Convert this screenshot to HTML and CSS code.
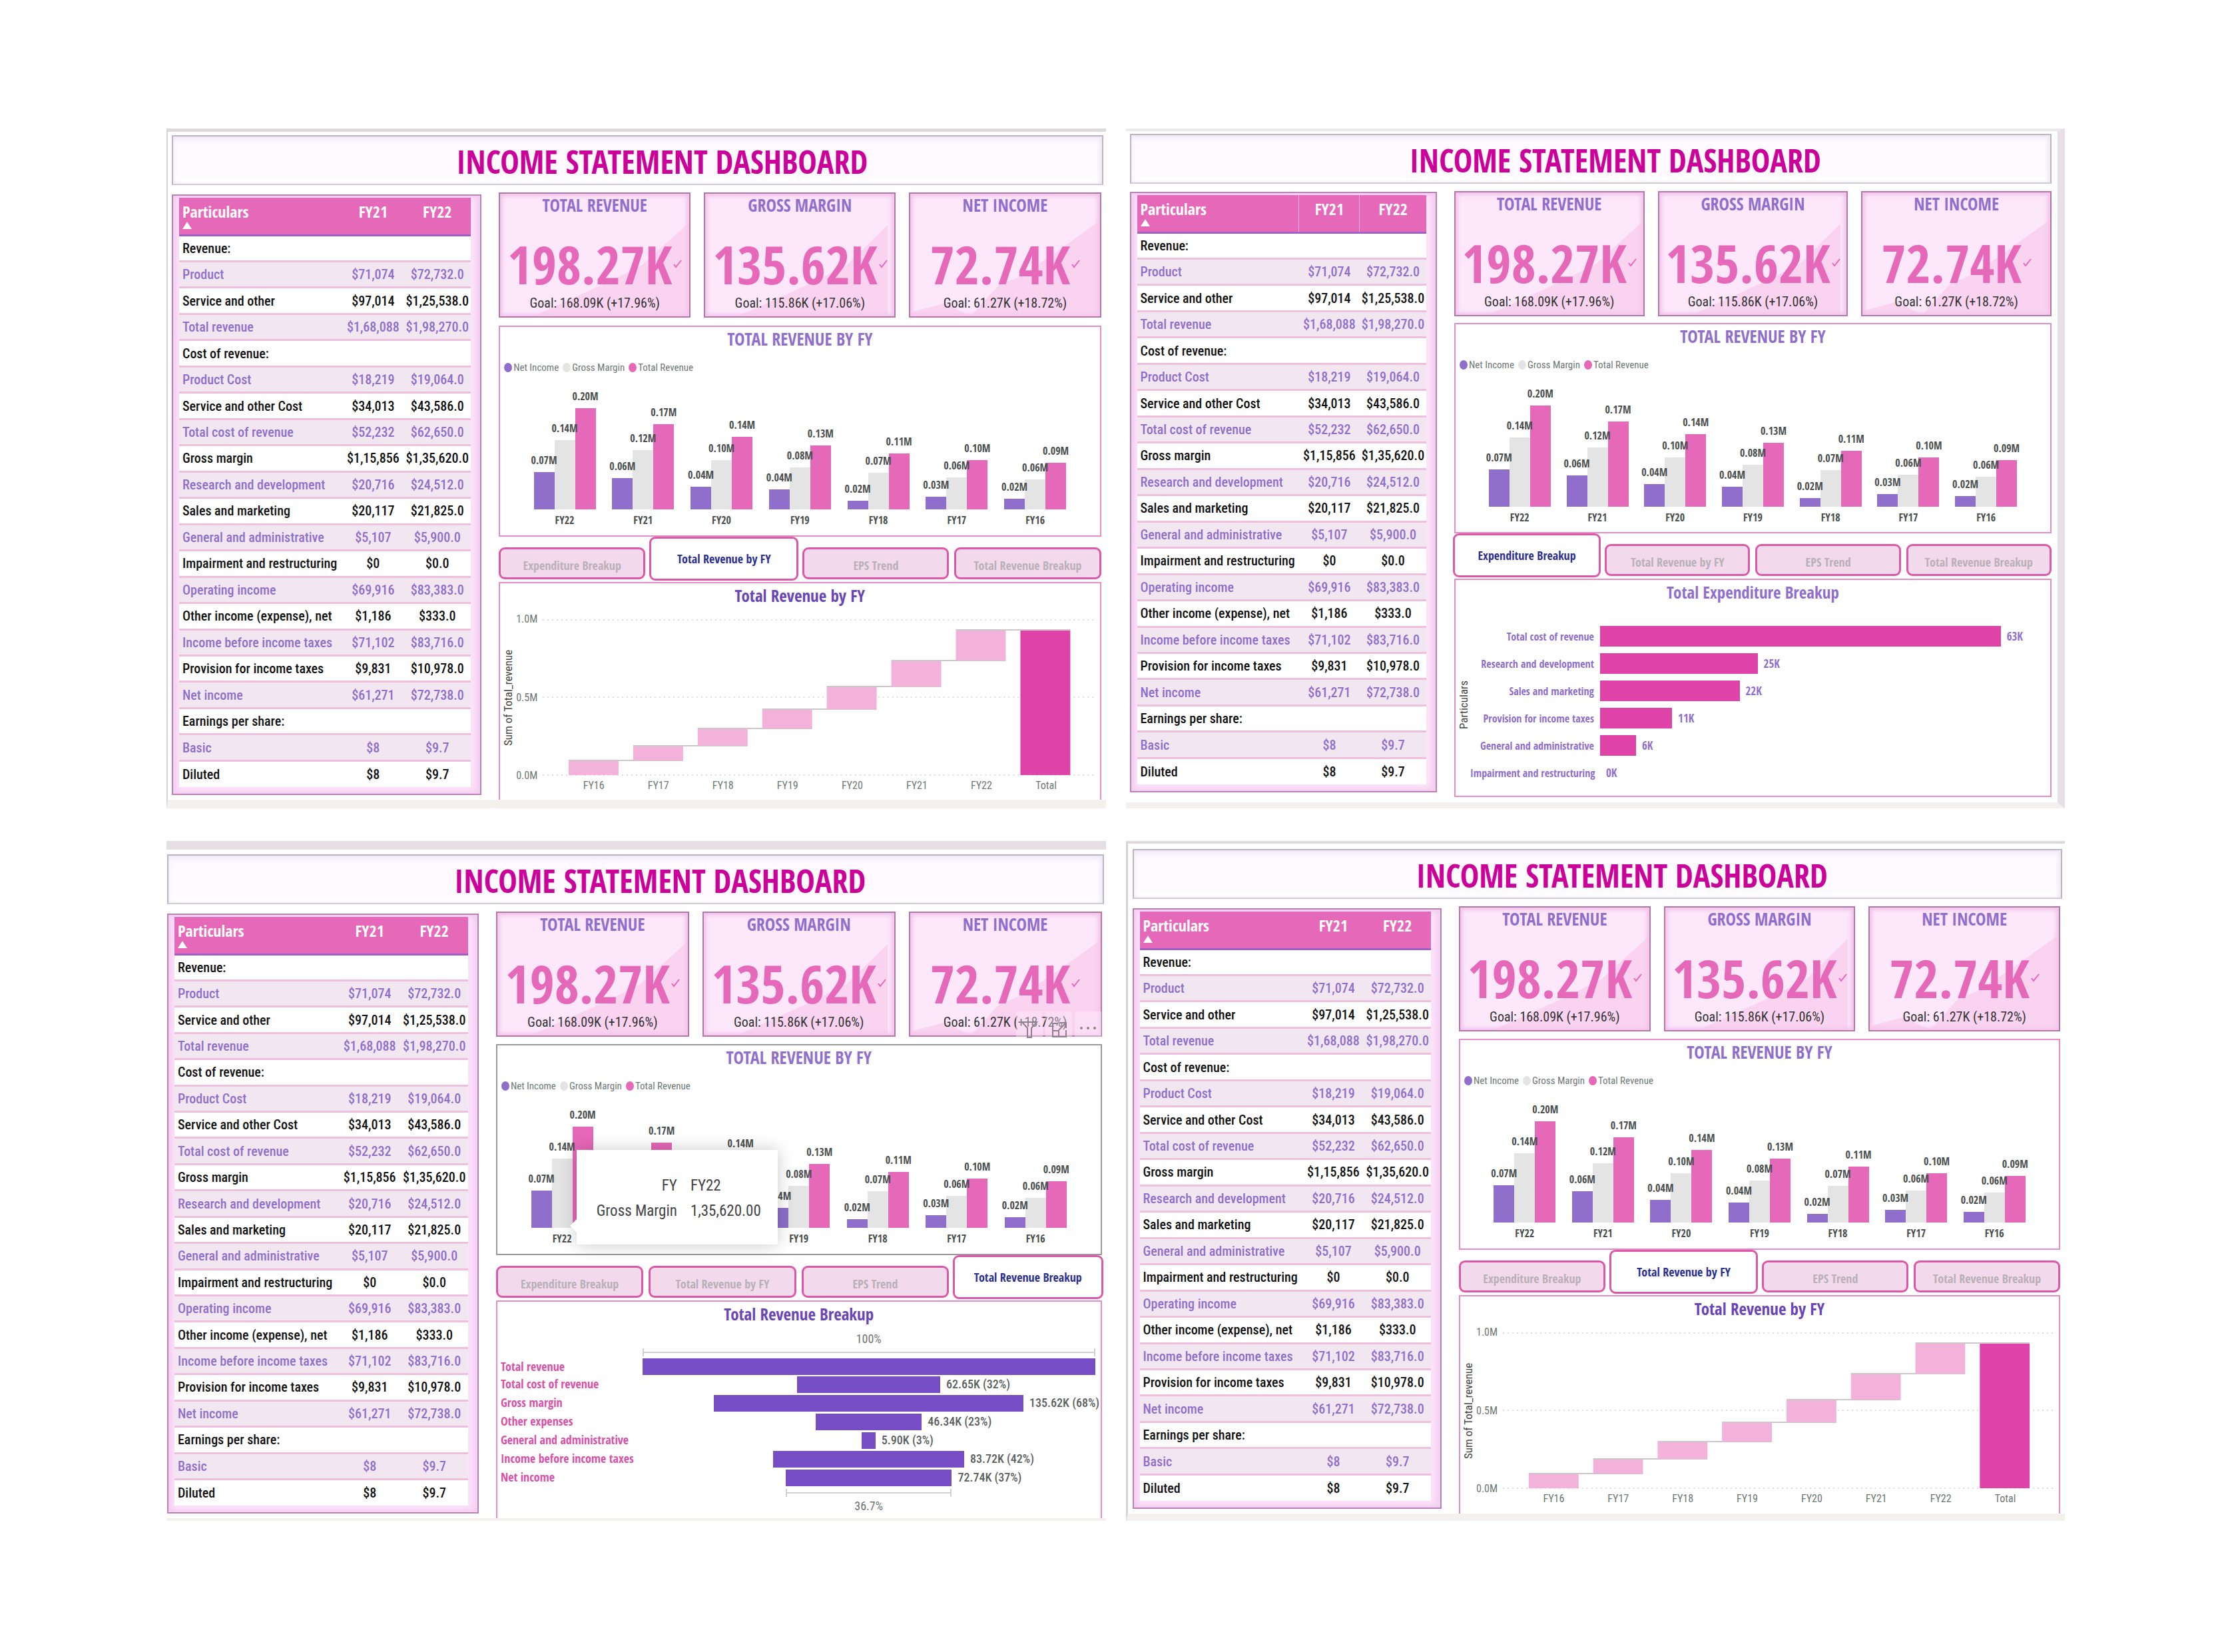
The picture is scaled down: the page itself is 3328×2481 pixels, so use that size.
FILE: index.html
```html
<!DOCTYPE html>
<html lang="en">
<head>
<meta charset="utf-8">
<meta name="viewport" content="width=device-width, initial-scale=1">
<title>Income Statement Dashboard</title>
<link rel="stylesheet" href="styles.css">
</head>
<body>
<main class="board">
  <section class="panel panel-a" data-view="waterfall" data-tab="1"></section>
  <section class="panel panel-b" data-view="expenditure" data-tab="0"></section>
  <section class="panel panel-c" data-view="funnel" data-tab="3" data-hover="yes"></section>
  <section class="panel panel-d" data-view="waterfall" data-tab="1"></section>
</main>
<script src="app.js"></script>
</body>
</html>
```
FILE: styles.css
```css
:root {
  --display: "Open Sans Condensed", "Roboto Condensed", "Open Sans", sans-serif;
  --text: "Roboto Condensed", "Roboto", "Open Sans", sans-serif;
  --pink: #e668b8;
  --hot: #e043a7;
  --violet: #8f6fcb;
  --deep: #774dc5;
  --edge: #e88cc8;
}

* { box-sizing: border-box; }

body {
  margin: 0;
  background: #fff;
  font-family: var(--text);
  color: #222;
}

h1, h2, h3, p { margin: 0; }

.board {
  display: grid;
  grid-template-columns: 1fr 1fr;
  gap: 49px 30px;
  padding: 193px 227px 193px 250px;
}

/* One dashboard page */
.panel {
  --gap: 12px;
  display: flex;
  flex-direction: column;
  border-style: solid;
  border-color: #ddd8da #e8dfe6 #f3f0ee #d6d3d6;
  border-width: 5px 0 13px 2px;
  padding: 5px 4px 0 6px;
}
.panel-b { --gap: 10px; border-width: 4px 11px 9px 0; border-top-color: #ebe9ea; padding: 4px 9px 8px 6px; }
.panel-c { --gap: 11px; border-width: 13px 0 4px 0; border-top-color: #e6dee5; padding: 7px 3px 0 1px; }
.panel-d { --gap: 11px; border-width: 4px 0 11px 3px; padding: 8px 4px 0 7px; }

.banner {
  height: 75px;
  display: flex;
  align-items: center;
  justify-content: center;
  padding: 4px 0 0 74px;
  border: 2px solid #bdb5c6;
  border-bottom-color: #cfccd2;
  background: #fefaff;
  box-shadow: inset 0 4px 8px #efe8f6, inset -3px 0 6px #f0eaf6, inset 0 -8px 8px #fff;
}
.banner h1 {
  font: 700 48px/56px var(--display);
  color: #cb0299;
}

.content {
  flex: 1;
  display: grid;
  grid-template-columns: 465fr 904fr;
  gap: 26px;
  padding: 11px 3px 0 0;
}
.panel-b .content { padding-right: 0; }

/* Statement table */
.statement {
  margin: 3px 0 7px;
  padding: 3px 14px 10px 9px;
  border: 2px solid #b981b4;
  background: #fde3fb;
  box-shadow: inset -6px -4px 10px #f3cdf0, inset 5px 3px 7px #f3cdf0;
}
.panel-b .statement { margin-top: 1px; }
.statement table {
  width: 100%;
  height: 100%;
  border-collapse: collapse;
  table-layout: fixed;
  font-size: 20px;
  line-height: 24px;
  font-weight: 500;
}
.statement .name { width: 56%; }
.statement .fy21 { width: 21%; }
.statement th, .statement td { padding: 0; text-align: center; }
.statement th:first-child, .statement td:first-child { padding-left: 5px; text-align: left; white-space: nowrap; }
.statement thead th {
  height: 56px;
  padding-top: 6px;
  vertical-align: top;
  background: var(--pink);
  border-bottom: 3px solid #a35fc8;
  color: #fff;
  font: 700 24px/30px var(--display);
}
.panel-b thead th + th { border-left: 1px solid #f7b5de; }
.sort {
  display: block;
  width: 0;
  border: 7px solid transparent;
  border-top: 0;
  border-bottom: 11px solid #fff;
}
.statement tbody td { height: 39px; background: #fff; color: #111; border-bottom: 3px solid #efbfde; }
.statement tbody tr:nth-child(even) td { background: #f2e7f0; color: var(--violet); }
.statement tbody tr:last-child td { border-bottom: 0; }

/* Right column */
.visuals { display: flex; flex-direction: column; min-width: 0; }

.cards {
  display: grid;
  grid-template-columns: repeat(3, 1fr);
  gap: 20px;
  margin-bottom: var(--gap);
}
.card {
  position: relative;
  height: 188px;
  border: 2px solid #b377ac;
  background: #fde7fb;
  box-shadow: inset 0 3px 6px #f0c0e8, inset -4px 0 6px #f3c8ee, inset 3px -3px 6px #f3c8ee;
  text-align: center;
}
.card > * { position: relative; }
.card .area { position: absolute; inset: 0; width: 100%; height: 100%; }
.card h3 { font: 700 26px/34px var(--display); color: var(--violet); }
.card .figure {
  display: flex;
  justify-content: center;
  align-items: center;
  gap: 2px;
  height: 90px;
  margin-top: 26px;
  font: 700 80px/90px var(--display);
  color: var(--pink);
}
.card .goal { font-size: 20px; line-height: 28px; color: #333; }

.chart {
  position: relative;
  border: 2px solid var(--edge);
  padding: 0 38px 7px;
}
.panel-c .chart { border-color: #999; }
.panel-b .chart { padding-bottom: 6px; }
.chart h2 { font: 700 26px/36px var(--display); color: var(--violet); text-align: center; }
.legend {
  display: flex;
  gap: 6px;
  margin: 15px -32px 0;
  padding: 0;
  list-style: none;
  font-size: 15px;
  line-height: 20px;
  color: #6d7774;
}
.legend li { display: flex; align-items: center; gap: 2px; }
.legend i { width: 12px; height: 14px; border-radius: 50%; }

.groups { display: grid; grid-template-columns: repeat(7, 1fr); height: 203px; }
.group { display: flex; justify-content: center; align-items: flex-end; }
.column {
  width: 31px;
  display: flex;
  justify-content: center;
}
.column span {
  position: relative;
  z-index: 1;
  height: 20px;
  margin-top: -28px;
  font: 700 16px/20px var(--display);
  color: #4a4f4e;
  white-space: nowrap;
}
.net { background: var(--violet); }
.gross { background: #e4e4e4; }
.total { background: var(--pink); }
.years {
  display: grid;
  grid-template-columns: repeat(7, 1fr);
  font: 700 16px/32px var(--display);
  color: #4a4f4e;
  text-align: center;
}

/* Hover state of the column chart */
.tooltip {
  position: absolute;
  z-index: 3;
  left: 119px;
  top: 157px;
  width: 302px;
  height: 142px;
  display: grid;
  grid-template-columns: 126px 1fr;
  align-content: center;
  gap: 0 20px;
  margin: 0;
  padding: 4px 0 0 25px;
  background: #fff;
  box-shadow: 0 0 24px rgba(0, 0, 0, .22);
  font-size: 23px;
  line-height: 38px;
  color: #444;
}
.tooltip dt { text-align: right; }
.tooltip dd { margin: 0; }
.tooltip::before {
  content: "";
  position: absolute;
  left: -10px;
  top: 104px;
  border: 10px solid transparent;
  border-left: 0;
  border-right-color: #fff;
}
.tools { position: absolute; z-index: 2; right: -1px; top: -51px; display: flex; gap: 4px; }
.tools button {
  width: 40px;
  height: 40px;
  padding: 14px 6px 0;
  border: 0;
  background: rgba(255, 240, 252, .4);
  overflow: hidden;
}
.tools svg { display: block; width: 28px; height: 26px; }

/* Tabs */
.tabs {
  display: grid;
  grid-template-columns: repeat(4, 1fr);
  gap: 8px;
  align-items: end;
  height: 66px;
  margin-bottom: 2px;
}
.tabs button {
  height: 48px;
  margin-bottom: 2px;
  padding: 6px 0 0;
  border: 3px solid #dc58a8;
  border-radius: 9px;
  background: #f3d9ec;
  font: 700 18px/24px var(--display);
  color: #b9b0b7;
}
.tabs button[aria-selected="true"] { height: 66px; margin: 0 -2px; padding: 0; background: #fff; color: #2c2f92; }

/* Lower visual */
.visual {
  flex: 1;
  min-height: 327px;
  border: 2px solid var(--edge);
  border-bottom: 0;
}
.panel-b .visual { border-bottom: 2px solid var(--edge); }
.visual h2 { font: 700 25px/36px var(--display); color: #6a45b8; text-align: center; }
.panel-b .visual h2 { color: var(--violet); }

.plot-row { display: flex; }
.axis-title {
  writing-mode: vertical-rl;
  transform: rotate(180deg);
  font-size: 17px;
  line-height: 20px;
  color: #444;
  text-align: center;
}

.waterfall { padding: 18px 6px 0 2px; }
.scale {
  width: 42px;
  display: flex;
  flex-direction: column;
  justify-content: space-between;
  margin: -10px 0;
  font-size: 16px;
  line-height: 20px;
  color: #6d7774;
  padding-left: 2px;
}
.waterfall .steps { flex: 1; min-width: 0; height: 235px; }
.waterfall .ticks {
  display: grid;
  grid-template-columns: repeat(8, 1fr);
  margin: 2px 26px 0 90px;
  font-size: 16px;
  line-height: 26px;
  color: #6d7774;
  text-align: center;
}

.expenditure { display: flex; padding-top: 28px; }
.expenditure .axis-title { width: 20px; margin-left: 2px; }
.hbars { flex: 1; margin: 0; }
.hbar { display: flex; align-items: center; gap: 9px; height: 41px; }
.hbar dt { width: 186px; text-align: right; font: 700 16px/22px var(--display); color: var(--violet); white-space: nowrap; }
.hbar dd { flex: 1; display: flex; align-items: center; gap: 9px; margin: 0; font: 700 17px/22px var(--display); color: var(--violet); }
.hbar i { height: 31px; background: var(--hot); }

.funnel { margin: 0; padding: 6px 8px 0 5px; font-size: 18px; line-height: 28px; }
.funnel dl { margin: 2px 0 3px; }
.funnel .stage { display: grid; grid-template-columns: 213px 1fr; }
.funnel .stage dt { font: 700 18px/26px var(--display); color: #dc4fa6; white-space: nowrap; }
.funnel .stage dd { margin: 0; display: flex; align-items: center; gap: 9px; white-space: nowrap; color: #5a5f5e; font-weight: 500; }
.funnel .stage i { flex: none; height: 25px; background: var(--deep); }
.mark { margin-left: 213px; text-align: center; color: #6d7370; }
.bracket {
  height: 12px;
  margin: 0 auto;
  border: solid #d0d0d0;
  border-width: 0 2px;
  background: linear-gradient(#d0d0d0, #d0d0d0) center / 100% 2px no-repeat;
}
```
FILE: app.js
```js
const STATEMENT = [
  ['Revenue:', '', ''],
  ['Product', '$71,074', '$72,732.0'],
  ['Service and other', '$97,014', '$1,25,538.0'],
  ['Total revenue', '$1,68,088', '$1,98,270.0'],
  ['Cost of revenue:', '', ''],
  ['Product Cost', '$18,219', '$19,064.0'],
  ['Service and other Cost', '$34,013', '$43,586.0'],
  ['Total cost of revenue', '$52,232', '$62,650.0'],
  ['Gross margin', '$1,15,856', '$1,35,620.0'],
  ['Research and development', '$20,716', '$24,512.0'],
  ['Sales and marketing', '$20,117', '$21,825.0'],
  ['General and administrative', '$5,107', '$5,900.0'],
  ['Impairment and restructuring', '$0', '$0.0'],
  ['Operating income', '$69,916', '$83,383.0'],
  ['Other income (expense), net', '$1,186', '$333.0'],
  ['Income before income taxes', '$71,102', '$83,716.0'],
  ['Provision for income taxes', '$9,831', '$10,978.0'],
  ['Net income', '$61,271', '$72,738.0'],
  ['Earnings per share:', '', ''],
  ['Basic', '$8', '$9.7'],
  ['Diluted', '$8', '$9.7'],
];

const CARDS = [
  ['TOTAL REVENUE', '198.27K', 'Goal: 168.09K (+17.96%)', 'M50 188 L155 140 L215 110 L288 44 L288 188Z'],
  ['GROSS MARGIN', '135.62K', 'Goal: 115.86K (+17.06%)', 'M50 188 L155 140 L215 110 L278 48 L278 188Z'],
  ['NET INCOME', '72.74K', 'Goal: 61.27K (+18.72%)', 'M0 182 L52 168 L92 188 L135 140 L165 128 L213 96 L288 42 L288 188 L0 188Z'],
];

// Year, then [thousands, label] for net income, gross margin and total revenue
const YEARS = [
  ['FY22', [72.7, '0.07M'], [135.6, '0.14M'], [198.3, '0.20M']],
  ['FY21', [61.3, '0.06M'], [115.9, '0.12M'], [168.1, '0.17M']],
  ['FY20', [44.3, '0.04M'], [96.9, '0.10M'], [143, '0.14M']],
  ['FY19', [39.2, '0.04M'], [82.9, '0.08M'], [125.8, '0.13M']],
  ['FY18', [16.6, '0.02M'], [72, '0.07M'], [110.4, '0.11M']],
  ['FY17', [25.5, '0.03M'], [62.3, '0.06M'], [96.6, '0.10M']],
  ['FY16', [20.5, '0.02M'], [58.4, '0.06M'], [91.2, '0.09M']],
];
const SERIES = [['net', 'Net Income'], ['gross', 'Gross Margin'], ['total', 'Total Revenue']];

const TABS = ['Expenditure Breakup', 'Total Revenue by FY', 'EPS Trend', 'Total Revenue Breakup'];

const EXPENDITURE = [
  ['Total cost of revenue', 62.65, '63K'],
  ['Research and development', 24.51, '25K'],
  ['Sales and marketing', 21.83, '22K'],
  ['Provision for income taxes', 10.98, '11K'],
  ['General and administrative', 5.9, '6K'],
  ['Impairment and restructuring', 0, '0K'],
];

const FUNNEL = [
  ['Total revenue', 100, ''],
  ['Total cost of revenue', 31.6, '62.65K (32%)'],
  ['Gross margin', 68.4, '135.62K (68%)'],
  ['Other expenses', 23.4, '46.34K (23%)'],
  ['General and administrative', 3, '5.90K (3%)'],
  ['Income before income taxes', 42.2, '83.72K (42%)'],
  ['Net income', 36.7, '72.74K (37%)'],
];

const each = (list, fn) => list.map(fn).join('');

const table = () => `
  <div class="statement"><table>
    <colgroup><col class="name"><col class="fy21"><col></colgroup>
    <thead><tr><th scope="col">Particulars<span class="sort"></span></th><th scope="col">FY21</th><th scope="col">FY22</th></tr></thead>
    <tbody>${each(STATEMENT, r => `<tr>${each(r, c => `<td>${c}</td>`)}</tr>`)}</tbody>
  </table></div>`;

const cards = () => `<div class="cards">${each(CARDS, ([title, figure, goal, area]) => `
  <article class="card">
    <svg class="area" viewBox="0 0 288 188" preserveAspectRatio="none" aria-hidden="true"><path d="${area}" fill="#f6c6ea" fill-opacity=".6"/></svg>
    <h3>${title}</h3>
    <p class="figure">${figure}<svg width="13" height="14" viewBox="0 0 13 14" aria-hidden="true"><path d="M1 8 L4 12 L12 2" fill="none" stroke="#e668b8" stroke-width="2"/></svg></p>
    <p class="goal">${goal}</p>
  </article>`)}</div>`;

const hover = () => `
  <dl class="tooltip"><dt>FY</dt><dd>FY22</dd><dt>Gross Margin</dt><dd>1,35,620.00</dd></dl>
  <div class="tools">
    <button aria-label="Filters"><svg viewBox="0 0 28 26" fill="none" stroke="#8d828b" stroke-width="2"><path d="M3 2 H25 L17 11 V25 H11 V11Z"/></svg></button>
    <button aria-label="Focus mode"><svg viewBox="0 0 28 26" fill="none" stroke="#8d828b" stroke-width="2"><path d="M12 4 H5 V24 H25 V14 M15 3 H25 V11 M25 3 L14 14 M5 15 H14 V24"/></svg></button>
    <button aria-label="More options"><svg viewBox="0 0 28 26" fill="#8d828b"><circle cx="4" cy="11" r="2"/><circle cx="14" cy="11" r="2"/><circle cx="24" cy="11" r="2"/></svg></button>
  </div>`;

const chart = hovered => `
  <article class="chart">
    <h2>TOTAL REVENUE BY FY</h2>
    <ul class="legend">${each(SERIES, ([cls, name]) => `<li><i class="${cls}"></i>${name}</li>`)}</ul>
    <div class="groups">${each(YEARS, ([, ...bars]) => `<div class="group">${each(bars, ([v, label], i) =>
      `<div class="column ${SERIES[i][0]}" style="height:${Math.round(v * 0.764)}px"><span>${label}</span></div>`)}</div>`)}</div>
    <div class="years">${each(YEARS, ([fy]) => `<span>${fy}</span>`)}</div>
    ${hovered ? hover() : ''}
  </article>`;

const tabs = active => `<div class="tabs" role="tablist">${each(TABS, (t, i) =>
  `<button role="tab" aria-selected="${i === active}">${t}</button>`)}</div>`;

const waterfall = () => {
  const tops = [234, 212, 190, 164, 135, 101, 62, 16];
  const steps = each(tops.slice(1), (y, i) => {
    const x = 39 + 97 * i;
    return `<rect x="${x}" y="${y}" width="75" height="${tops[i] - y}" fill="#f2b2da"/>`
      + `<rect x="${x}" y="${y - 1}" width="172" height="2" fill="#cdc6ca"/>`;
  });
  return `<h2>Total Revenue by FY</h2>
  <div class="waterfall">
    <div class="plot-row">
      <span class="axis-title">Sum of Total_revenue</span>
      <div class="scale"><span>1.0M</span><span>0.5M</span><span>0.0M</span></div>
      <svg class="steps" viewBox="0 0 831 235" preserveAspectRatio="none" role="img" aria-label="Cumulative revenue by year">
        <path d="M0 1 H831 M0 117 H831 M0 234 H831" stroke="#dcdcdc" stroke-width="2" stroke-dasharray="2 5"/>
        ${steps}<rect x="718" y="17" width="75" height="217" fill="#e043a7"/>
      </svg>
    </div>
    <div class="ticks">${each(['FY16', 'FY17', 'FY18', 'FY19', 'FY20', 'FY21', 'FY22', 'Total'], t => `<span>${t}</span>`)}</div>
  </div>`;
};

const expenditure = () => `<h2>Total Expenditure Breakup</h2>
  <div class="expenditure">
    <span class="axis-title">Particulars</span>
    <dl class="hbars">${each(EXPENDITURE, ([name, v, label]) =>
      `<div class="hbar"><dt>${name}</dt><dd><i style="width:${Math.round(v * 1.42)}%"></i>${label}</dd></div>`)}</dl>
  </div>`;

const funnel = () => `<h2>Total Revenue Breakup</h2>
  <div class="funnel">
    <div class="mark">100%<div class="bracket" style="width:100%"></div></div>
    <dl>${each(FUNNEL, ([name, v, label]) =>
      `<div class="stage"><dt>${name}</dt><dd><i style="width:${v}%;margin-left:${(100 - v) / 2}%"></i>${label}</dd></div>`)}</dl>
    <div class="mark"><div class="bracket" style="width:36.7%"></div>36.7%</div>
  </div>`;

const VIEWS = { waterfall, expenditure, funnel };

document.querySelectorAll('.panel').forEach(panel => {
  const { view, tab, hover: hovered } = panel.dataset;
  panel.innerHTML = `
    <header class="banner"><h1>INCOME STATEMENT DASHBOARD</h1></header>
    <div class="content">${table()}
      <div class="visuals">${cards()}${chart(hovered)}${tabs(+tab)}<article class="visual">${VIEWS[view]()}</article></div>
    </div>`;
});
```
